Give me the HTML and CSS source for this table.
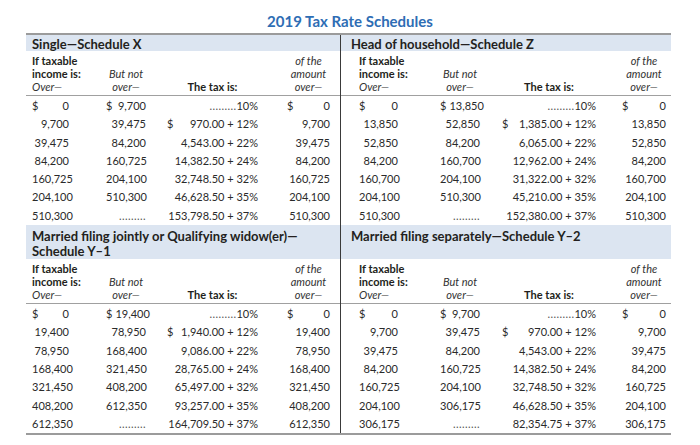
FILE: index.html
```html
<!DOCTYPE html>
<html lang="en">
<head>
<meta charset="utf-8">
<title>2019 Tax Rate Schedules</title>
<link rel="stylesheet" href="styles.css">
</head>
<body>
<h1 class="title">2019 Tax Rate Schedules</h1>
<div class="sheet">
  <section class="sched L top">
    <div class="band">Single—Schedule X</div>
    <div class="grid colhead">
      <div class="h h1"><b>If taxable</b><b>income is:</b><i>Over—</i></div>
      <div class="h h2"><i>But not</i><i>over—</i></div>
      <div class="h h3"><b>The tax is:</b></div>
      <div class="h h4"><i>of the</i><i>amount</i><i>over—</i></div>
    </div>
    <div class="grid rows">
      <div class="c"><span>$</span><span>0</span></div><div class="c"><span>$</span><span>9,700</span></div><div class="c"><span><span class="dots">.........</span>10%</span></div><div class="c"><span>$</span><span>0</span></div>
      <div class="c"><span>9,700</span></div><div class="c"><span>39,475</span></div><div class="c"><span>$</span><span>970.00 + 12%</span></div><div class="c"><span>9,700</span></div>
      <div class="c"><span>39,475</span></div><div class="c"><span>84,200</span></div><div class="c"><span>4,543.00 + 22%</span></div><div class="c"><span>39,475</span></div>
      <div class="c"><span>84,200</span></div><div class="c"><span>160,725</span></div><div class="c"><span>14,382.50 + 24%</span></div><div class="c"><span>84,200</span></div>
      <div class="c"><span>160,725</span></div><div class="c"><span>204,100</span></div><div class="c"><span>32,748.50 + 32%</span></div><div class="c"><span>160,725</span></div>
      <div class="c"><span>204,100</span></div><div class="c"><span>510,300</span></div><div class="c"><span>46,628.50 + 35%</span></div><div class="c"><span>204,100</span></div>
      <div class="c"><span>510,300</span></div><div class="c"><span class="dots">.........</span></div><div class="c"><span>153,798.50 + 37%</span></div><div class="c"><span>510,300</span></div>
    </div>
  </section>
  <section class="sched R top">
    <div class="band">Head of household—Schedule Z</div>
    <div class="grid colhead">
      <div class="h h1"><b>If taxable</b><b>income is:</b><i>Over—</i></div>
      <div class="h h2"><i>But not</i><i>over—</i></div>
      <div class="h h3"><b>The tax is:</b></div>
      <div class="h h4"><i>of the</i><i>amount</i><i>over—</i></div>
    </div>
    <div class="grid rows">
      <div class="c"><span>$</span><span>0</span></div><div class="c"><span>$</span><span>13,850</span></div><div class="c"><span><span class="dots">.........</span>10%</span></div><div class="c"><span>$</span><span>0</span></div>
      <div class="c"><span>13,850</span></div><div class="c"><span>52,850</span></div><div class="c"><span>$</span><span>1,385.00 + 12%</span></div><div class="c"><span>13,850</span></div>
      <div class="c"><span>52,850</span></div><div class="c"><span>84,200</span></div><div class="c"><span>6,065.00 + 22%</span></div><div class="c"><span>52,850</span></div>
      <div class="c"><span>84,200</span></div><div class="c"><span>160,700</span></div><div class="c"><span>12,962.00 + 24%</span></div><div class="c"><span>84,200</span></div>
      <div class="c"><span>160,700</span></div><div class="c"><span>204,100</span></div><div class="c"><span>31,322.00 + 32%</span></div><div class="c"><span>160,700</span></div>
      <div class="c"><span>204,100</span></div><div class="c"><span>510,300</span></div><div class="c"><span>45,210.00 + 35%</span></div><div class="c"><span>204,100</span></div>
      <div class="c"><span>510,300</span></div><div class="c"><span class="dots">.........</span></div><div class="c"><span>152,380.00 + 37%</span></div><div class="c"><span>510,300</span></div>
    </div>
  </section>
  <section class="sched L bottom">
    <div class="band">Married filing jointly or Qualifying widow(er)—<br>Schedule Y–1</div>
    <div class="grid colhead">
      <div class="h h1"><b>If taxable</b><b>income is:</b><i>Over—</i></div>
      <div class="h h2"><i>But not</i><i>over—</i></div>
      <div class="h h3"><b>The tax is:</b></div>
      <div class="h h4"><i>of the</i><i>amount</i><i>over—</i></div>
    </div>
    <div class="grid rows">
      <div class="c"><span>$</span><span>0</span></div><div class="c"><span>$</span><span>19,400</span></div><div class="c"><span><span class="dots">.........</span>10%</span></div><div class="c"><span>$</span><span>0</span></div>
      <div class="c"><span>19,400</span></div><div class="c"><span>78,950</span></div><div class="c"><span>$</span><span>1,940.00 + 12%</span></div><div class="c"><span>19,400</span></div>
      <div class="c"><span>78,950</span></div><div class="c"><span>168,400</span></div><div class="c"><span>9,086.00 + 22%</span></div><div class="c"><span>78,950</span></div>
      <div class="c"><span>168,400</span></div><div class="c"><span>321,450</span></div><div class="c"><span>28,765.00 + 24%</span></div><div class="c"><span>168,400</span></div>
      <div class="c"><span>321,450</span></div><div class="c"><span>408,200</span></div><div class="c"><span>65,497.00 + 32%</span></div><div class="c"><span>321,450</span></div>
      <div class="c"><span>408,200</span></div><div class="c"><span>612,350</span></div><div class="c"><span>93,257.00 + 35%</span></div><div class="c"><span>408,200</span></div>
      <div class="c"><span>612,350</span></div><div class="c"><span class="dots">.........</span></div><div class="c"><span>164,709.50 + 37%</span></div><div class="c"><span>612,350</span></div>
    </div>
  </section>
  <section class="sched R bottom">
    <div class="band">Married filing separately—Schedule Y–2</div>
    <div class="grid colhead">
      <div class="h h1"><b>If taxable</b><b>income is:</b><i>Over—</i></div>
      <div class="h h2"><i>But not</i><i>over—</i></div>
      <div class="h h3"><b>The tax is:</b></div>
      <div class="h h4"><i>of the</i><i>amount</i><i>over—</i></div>
    </div>
    <div class="grid rows">
      <div class="c"><span>$</span><span>0</span></div><div class="c"><span>$</span><span>9,700</span></div><div class="c"><span><span class="dots">.........</span>10%</span></div><div class="c"><span>$</span><span>0</span></div>
      <div class="c"><span>9,700</span></div><div class="c"><span>39,475</span></div><div class="c"><span>$</span><span>970.00 + 12%</span></div><div class="c"><span>9,700</span></div>
      <div class="c"><span>39,475</span></div><div class="c"><span>84,200</span></div><div class="c"><span>4,543.00 + 22%</span></div><div class="c"><span>39,475</span></div>
      <div class="c"><span>84,200</span></div><div class="c"><span>160,725</span></div><div class="c"><span>14,382.50 + 24%</span></div><div class="c"><span>84,200</span></div>
      <div class="c"><span>160,725</span></div><div class="c"><span>204,100</span></div><div class="c"><span>32,748.50 + 32%</span></div><div class="c"><span>160,725</span></div>
      <div class="c"><span>204,100</span></div><div class="c"><span>306,175</span></div><div class="c"><span>46,628.50 + 35%</span></div><div class="c"><span>204,100</span></div>
      <div class="c"><span>306,175</span></div><div class="c"><span class="dots">.........</span></div><div class="c"><span>82,354.75 + 37%</span></div><div class="c"><span>306,175</span></div>
    </div>
  </section>
</div>
</body>
</html>
```
FILE: styles.css
```css
* { box-sizing: border-box; }
html, body { margin: 0; padding: 0; background: #fff; }
body {
  width: 700px;
  height: 445px;
  overflow: hidden;
  font-family: Lato, "Open Sans", sans-serif;
  color: #231f20;
}
.title {
  margin: 0;
  padding-top: 12px;
  height: 33px;
  font-size: 15px;
  line-height: 18px;
  font-weight: 700;
  color: #2e6db4;
  text-align: center;
}
.sheet {
  margin-left: 26px;
  width: 645px;
  display: grid;
  grid-template-columns: 315px 330px;
  border-top: 2px solid #9b9b9b;
  border-bottom: 2px solid #9b9b9b;
}
.sched.L { border-right: 1px solid #3a3a3a; }
.band {
  background: #dce5f1;
  font-size: 13px;
  font-weight: 700;
  line-height: 14px;
  color: #231f20;
}
.top .band { height: 16px; padding-top: 2px; }
.bottom .band { height: 34px; padding-top: 4px; line-height: 15px; }
.L .band { padding-left: 6px; }
.R .band { padding-left: 10px; }

.grid { display: grid; }
.L .grid { grid-template-columns: 43px 77px 112px 72px; }
.R .grid { grid-template-columns: 57px 82px 116px 70px; }

.colhead {
  height: 45px;
  padding-top: 3px;
  border-bottom: 1px solid #a0a0a0;
  font-size: 11px;
  line-height: 13px;
}
.h { display: flex; flex-direction: column; justify-content: flex-start; white-space: nowrap; }
.h b { font-weight: 700; }
.h i { font-style: italic; color: #333; }
.h2 { padding-top: 13px; text-align: center; }
.h3 { padding-top: 26px; text-align: center; padding-left: 10px; }
.h4 { text-align: center; }

.rows {
  font-size: 11px;
  line-height: 18.3px;
  color: #2a2a2a;
  padding-top: 1px;
}
.c { display: flex; justify-content: space-between; gap: 3px; white-space: nowrap; }
.c > :last-child { margin-left: auto; }
.dots { letter-spacing: 0.4px; color: #555; }

.L .grid > :nth-child(4n+1) { padding-left: 6px; }
.L .grid > :nth-child(4n+2) { padding-left: 37px; }
.L .grid > :nth-child(4n+3) { padding-left: 21px; }
.L .grid > :nth-child(4n+4) { padding-left: 29px; }
.R .grid > :nth-child(4n+1) { padding-left: 18px; }
.R .grid > :nth-child(4n+2) { padding-left: 42px; }
.R .grid > :nth-child(4n+3) { padding-left: 22px; }
.R .grid > :nth-child(4n+4) { padding-left: 26px; }
```
